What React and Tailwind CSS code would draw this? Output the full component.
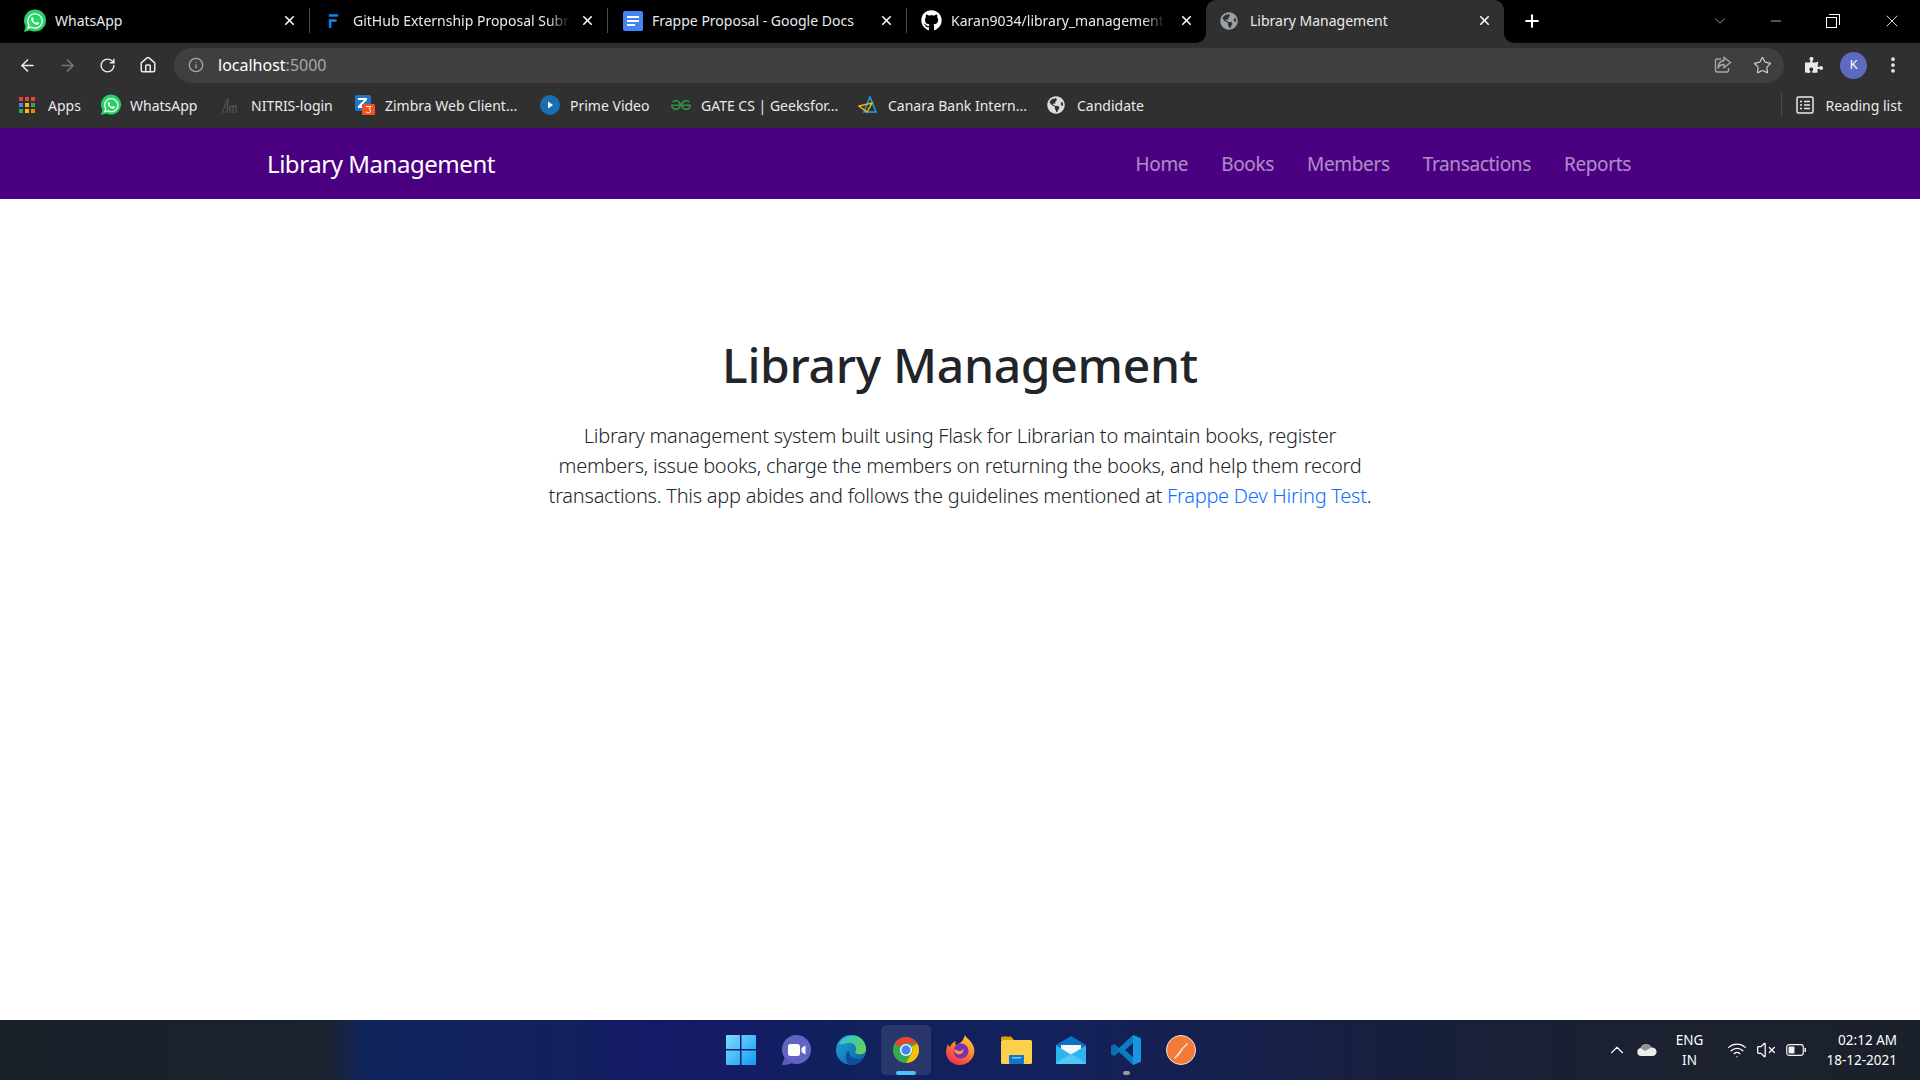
import { ArrowLeft, ArrowRight, RotateCw, Home, Info, Star, X, Plus, ChevronDown, Minus, ChevronUp, Wifi, VolumeX, EllipsisVertical } from "lucide-react";
import { FaWhatsapp, FaGithub, FaGlobeAmericas, FaPuzzlePiece } from "react-icons/fa";
import { SiGeeksforgeeks } from "react-icons/si";

const WhatsAppIcon = ({ size = 24 }) => (
  <span className="relative flex shrink-0 items-center justify-center" style={{ width: size, height: size }}>
    <svg viewBox="0 0 24 24" className="absolute inset-0 h-full w-full">
      <circle cx="12" cy="11.5" r="11" fill="#25d366" />
      <path d="M1 23l2-7 5 5z" fill="#25d366" />
    </svg>
    <FaWhatsapp className="relative text-white" style={{ width: size * 0.75, height: size * 0.75 }} />
  </span>
);

const FrappeIcon = () => (
  <svg viewBox="0 0 14 18" className="h-[16px] w-[12px] shrink-0">
    <rect x="1" y="1" width="11" height="3" fill="#0a84e8" />
    <rect x="1" y="7" width="9" height="3" fill="#0a84e8" />
    <rect x="1" y="7" width="3" height="10" fill="#0a84e8" />
  </svg>
);

const DocsIcon = () => (
  <svg viewBox="0 0 20 20" className="h-[20px] w-[20px] shrink-0">
    <rect width="20" height="20" rx="2" fill="#4285f4" />
    <rect x="4" y="5" width="12" height="2" fill="#fff" />
    <rect x="4" y="9" width="12" height="2" fill="#fff" />
    <rect x="4" y="13" width="8" height="2" fill="#fff" />
  </svg>
);

const AppsIcon = () => (
  <svg viewBox="0 0 16 16" className="h-[16px] w-[16px] shrink-0">
    {["#ea4335", "#ea4335", "#ea4335", "#4285f4", "#fbbc05", "#34a853", "#34a853", "#fbbc05", "#ea8600"].map((c, i) => (
      <rect key={i} x={(i % 3) * 6} y={Math.floor(i / 3) * 6} width="4" height="4" fill={c} />
    ))}
  </svg>
);

const NitrisIcon = () => (
  <svg viewBox="0 0 20 20" className="h-[20px] w-[20px] shrink-0" fill="none" stroke="#5f5f5f" strokeWidth="1">
    <path d="M2 18c2-4 4-12 6-14 0 4-1 10-1 14M10 18v-7M13 18v-7M16 18v-7M10 11h7" />
  </svg>
);

const ZimbraIcon = () => (
  <span className="relative h-[20px] w-[20px] shrink-0">
    <svg viewBox="0 0 20 20" className="h-[20px] w-[20px]">
      <rect x="0" y="0" width="16" height="16" rx="2" fill="#1f77c9" />
      <path d="M3 3h9v2l-6 6h6v2H3v-2l6-6H3z" fill="#fff" />
      <rect x="7" y="9" width="13" height="13" rx="1.5" fill="#f4511e" />
      <path d="M11 11.5h5l-2 2.5c2 0 2.4 3.5-.4 3.8-1 .1-2-.3-2.600-1" fill="none" stroke="#fff" strokeWidth="1" />
    </svg>
  </span>
);

const PrimeIcon = () => (
  <svg viewBox="0 0 20 20" className="h-[20px] w-[20px] shrink-0">
    <circle cx="10" cy="10" r="10" fill="#1a6eb0" />
    <path d="M8 6.500l5 3.500-5 3.500z" fill="#fff" />
  </svg>
);

const CanaraIcon = () => (
  <svg viewBox="0 0 20 18" className="h-[18px] w-[20px] shrink-0" fill="none" strokeWidth="1.500">
    <path d="M12 1l6 15H6z" stroke="#1aa5dc" />
    <path d="M1 10l13-3-5 9z" stroke="#f5b21a" />
  </svg>
);

const ShareIcon = () => (
  <svg viewBox="0 0 20 20" className="h-[20px] w-[20px]" fill="none" stroke="#a8a8a8" strokeWidth="1.400">
    <path d="M8 4H4a1.500 1.500 0 0 0-1.500 1.500v10A1.500 1.500 0 0 0 4 17h10a1.500 1.500 0 0 0 1.500-1.500V13" />
    <path d="M11 2.500l6.500 5-6.500 5V9.500c-3 0-5 1-6 4 0-4.500 2-7.500 6-8z" />
  </svg>
);

const ReadingListIcon = () => (
  <svg viewBox="0 0 18 18" className="h-[18px] w-[18px] shrink-0" fill="none" stroke="#e8eaed" strokeWidth="1.500">
    <rect x="1" y="1" width="16" height="16" rx="1.500" />
    <path d="M4 5.500h2M8 5.500h6M4 9h2M8 9h6M4 12.500h2M8 12.500h6" />
  </svg>
);

const WinIcon = () => (
  <svg viewBox="0 0 30 30" className="h-[30px] w-[30px]">
    <defs>
      <linearGradient id="win" x1="0" y1="0" x2="1" y2="1">
        <stop offset="0" stopColor="#7fdcff" />
        <stop offset="1" stopColor="#0f9cf5" />
      </linearGradient>
    </defs>
    <path d="M0 1a1 1 0 0 1 1-1h13v14H0zM15.500 0H29a1 1 0 0 1 1 1v13H15.500zM0 15.500h14V30H1a1 1 0 0 1-1-1zM15.500 15.500H30V29a1 1 0 0 1-1 1H15.500z" fill="url(#win)" />
  </svg>
);

const ChatIcon = () => (
  <svg viewBox="0 0 30 30" className="h-[30px] w-[30px]">
    <circle cx="15.500" cy="14.500" r="14.500" fill="#6264c4" />
    <path d="M1 30c1-4 2-6 4-8l6 6c-3 1.500-6 2-10 2z" fill="#5a5dbd" />
    <rect x="7" y="9" width="12" height="12" rx="2.500" fill="#fff" />
    <path d="M20.500 13l4-2.500v9l-4-2.500z" fill="#fff" />
  </svg>
);

const EdgeIcon = () => (
  <svg viewBox="0 0 30 30" className="h-[30px] w-[30px]">
    <defs>
      <linearGradient id="edge" x1="0" y1="0" x2="1" y2="1">
        <stop offset="0" stopColor="#1ea7d8" />
        <stop offset="1" stopColor="#0c5aa6" />
      </linearGradient>
      <linearGradient id="edge2" x1="0" y1="0" x2="1" y2="1">
        <stop offset="0" stopColor="#2bc3d2" />
        <stop offset="1" stopColor="#6fd34c" />
      </linearGradient>
    </defs>
    <circle cx="15" cy="15" r="15" fill="url(#edge)" />
    <path d="M3 9C6 2 14-1 21 1c6 2 9 8 9 13 0 5-5 6-9 5-2-.500-2-2-1-4 1-4-3-8-8-7-4 .500-7 2-9 1z" fill="url(#edge2)" />
    <path d="M13 16c0 5 4 8 9 8 2 0 4-.500 6-2-2 5-7 8-12 8-4 0-6-4-6-8 0-3 1-6 3-6z" fill="#0b4f96" />
  </svg>
);

const ChromeIcon = () => (
  <svg viewBox="0 0 30 30" className="h-[28px] w-[28px]">
    <circle cx="15" cy="15" r="14" fill="#34a853" />
    <path d="M15 1a14 14 0 0 1 12.120 7H15a7 7 0 0 0-6.100 3.500L2.900 8A14 14 0 0 1 15 1z" fill="#ea4335" />
    <path d="M27.120 8A14 14 0 0 1 15 29l6.060-10.500A7 7 0 0 0 21 11.500z" fill="#fbbc05" />
    <circle cx="15" cy="15" r="6.500" fill="#fff" />
    <circle cx="15" cy="15" r="5" fill="#4285f4" />
  </svg>
);

const FirefoxIcon = () => (
  <svg viewBox="0 0 30 30" className="h-[30px] w-[30px]">
    <defs>
      <linearGradient id="fx" x1="0.800" y1="0" x2="0.200" y2="1">
        <stop offset="0" stopColor="#ffd23a" />
        <stop offset="0.500" stopColor="#ff7a2b" />
        <stop offset="1" stopColor="#f0245c" />
      </linearGradient>
    </defs>
    <path d="M19 0c1 3 4 4 6 7 3 4 4 8 3 12-2 7-8 11-14 11C6 30 0 24 0 17c0-3 1-6 2-8 0 1 1 2 2 3 1-3 3-5 6-6-1 2-1 3 0 4 3-1 7-3 9-10z" fill="url(#fx)" />
    <circle cx="15" cy="16" r="7.500" fill="#7a2fb5" />
    <path d="M8 14c3 2 7 3 10 0-1 5-4 6-7 5-2-1-3-3-3-5z" fill="#ff9a3c" />
  </svg>
);

const FolderIcon = () => (
  <svg viewBox="0 0 31 28" className="h-[28px] w-[31px]">
    <path d="M0 2a1.500 1.500 0 0 1 1.500-1.500H10L13 4h-13z" fill="#d9a300" />
    <rect x="0" y="4" width="31" height="24" rx="1.500" fill="#fcd04a" />
    <rect x="8" y="19" width="15" height="9" rx="1" fill="#1178c9" />
    <rect x="11" y="21" width="9" height="1.500" fill="#7cc6f5" />
  </svg>
);

const MailIcon = () => (
  <svg viewBox="0 0 30 28" className="h-[28px] w-[30px]">
    <path d="M0 9L15 0l15 9v2L15 20 0 11z" fill="#0d72c4" />
    <path d="M5 9h20v6l-10 6-10-6z" fill="#f3f6fa" />
    <path d="M0 9.500l15 9 15-9V27a1 1 0 0 1-1 1H1a1 1 0 0 1-1-1z" fill="#2cb6f0" />
    <path d="M0 27l15-9 15 9v0a1 1 0 0 1-1 1H1a1 1 0 0 1-1-1z" fill="#4fc8f5" />
  </svg>
);

const VsCodeIcon = () => (
  <svg viewBox="0 0 30 30" className="h-[30px] w-[30px]">
    <path d="M22 0l8 3.500v23L22 30 8 17l-5 4-3-2v-8l3-2 5 4z" fill="#0a7cc4" />
    <path d="M22 0l8 3.500v23L22 30z" fill="#1a95e0" />
    <path d="M22 8l-8 7 8 7z" fill="#111f5c" />
    <path d="M3 9.500l-3 1.500v8l3 1.500L7 15z" fill="#0a6db0" />
  </svg>
);

const PostmanIcon = () => (
  <svg viewBox="0 0 30 30" className="h-[30px] w-[30px]">
    <circle cx="15" cy="15" r="14.500" fill="#f47a3a" stroke="#f6e6de" strokeWidth="1" />
    <path d="M8 23l5-6 3-4 5-5 1 1-5 5-3 5-5 5z" fill="#fbe3d6" />
  </svg>
);

const OneDrive = () => (
  <svg viewBox="0 0 20 12" className="h-[12px] w-[20px]">
    <path d="M4 12a4 4 0 0 1-.5-7.900A6 6 0 0 1 14.500 3.500 4.300 4.300 0 0 1 16 12z" fill="#ececec" />
    <path d="M3.500 4.100A6 6 0 0 1 14.500 3.500L8 7z" fill="#8f9399" />
  </svg>
);

const BatteryIcon = () => (
  <svg viewBox="0 0 20 12" className="h-[12px] w-[20px]" fill="none">
    <rect x="0.700" y="0.700" width="16.600" height="10.600" rx="2.500" stroke="#f2f2f2" strokeWidth="1.200" />
    <rect x="2.500" y="2.500" width="6" height="7" rx="1" fill="#f2f2f2" />
    <rect x="18.500" y="4" width="1.500" height="4" fill="#f2f2f2" />
  </svg>
);

const tabs = [
  { title: "WhatsApp", icon: <WhatsAppIcon />, cls: "w-[310px] pl-[23px]", gap: "gap-[8px] pr-[12px]" },
  { title: "GitHub Externship Proposal Submission", icon: <FrappeIcon />, cls: "w-[298px] pl-[18px]", gap: "gap-[13px] pr-[10px]" },
  { title: "Frappe Proposal - Google Docs", icon: <DocsIcon />, cls: "w-[299px] pl-[15px]", gap: "gap-[9px] pr-[8px]" },
  { title: "Karan9034/library_management: Library", icon: <FaGithub className="h-[21px] w-[21px] shrink-0 text-white" />, cls: "w-[299px] pl-[14px] pr-[12px]", gap: "gap-[9px] pr-[14px]" },
];

const bookmarks = [
  { title: "Apps", icon: <AppsIcon />, w: "w-[81px] gap-[13px]" },
  { title: "WhatsApp", icon: <WhatsAppIcon size={22} />, w: "w-[120px] gap-[8px]" },
  { title: "NITRIS-login", icon: <NitrisIcon />, w: "w-[135px] gap-[11px]" },
  { title: "Zimbra Web Client...", icon: <ZimbraIcon />, w: "w-[185px] gap-[10px]" },
  { title: "Prime Video", icon: <PrimeIcon />, w: "w-[131px] gap-[10px]" },
  { title: "GATE CS | Geeksfor...", icon: <SiGeeksforgeeks className="h-[20px] w-[20px] shrink-0 text-[#2f8d46]" />, w: "w-[187px] gap-[10px]" },
  { title: "Canara Bank Intern...", icon: <CanaraIcon />, w: "w-[189px] gap-[10px]" },
  { title: "Candidate", icon: <FaGlobeAmericas className="h-[18px] w-[18px] shrink-0 text-[#dcdcdc]" />, w: "w-[120px] gap-[12px]" },
];

const navLinks = ["Home", "Books", "Members", "Transactions", "Reports"];
const taskbarIcons = [<WinIcon />, <ChatIcon />, <EdgeIcon />, <ChromeIcon />, <FirefoxIcon />, <FolderIcon />, <MailIcon />, <VsCodeIcon />, <PostmanIcon />];

export default function App() {
  return (
    <div className="flex h-screen w-full flex-col overflow-hidden bg-white font-['Noto_Sans',sans-serif]">
      {/* Tab strip */}
      <div className="flex h-[43px] shrink-0 items-stretch bg-[#303030] text-white">
        <div className="flex shrink-0 rounded-br-[10px] bg-black">
          {tabs.map((tab, i) => (
            <div key={i} className={`flex h-[43px] shrink-0 items-center pb-[2px] ${tab.cls}`}>
              <div className={`flex min-w-0 flex-1 items-center ${tab.gap}`}>
                {tab.icon}
                <span className={`min-w-0 flex-1 overflow-hidden whitespace-nowrap text-[14px] text-[#e8eaed] ${i === 1 || i === 3 ? "[mask-image:linear-gradient(90deg,#000_90%,transparent)]" : ""}`}>{tab.title}</span>
              </div>
              <X className="h-[15px] w-[15px] shrink-0 text-white" strokeWidth={2.5} />
              {i < 3 && <span className="ml-[12px] h-[25px] w-px shrink-0 bg-[#4a4a4a]" />}
            </div>
          ))}
        </div>
        <div className="w-[298px] shrink-0 bg-black">
          <div className="flex h-[43px] items-center gap-[12px] rounded-t-[10px] bg-[#303030] pb-[2px] pl-[14px] pr-[12px]">
            <FaGlobeAmericas className="h-[18px] w-[18px] shrink-0 text-[#9aa0a6]" />
            <span className="flex-1 whitespace-nowrap text-[14px] text-[#e8eaed]">Library Management</span>
            <X className="h-[15px] w-[15px] shrink-0 text-white" strokeWidth={2.5} />
          </div>
        </div>
        <div className="flex flex-1 items-center rounded-bl-[10px] bg-black pb-[2px] pl-[18px]">
          <Plus className="h-[20px] w-[20px] text-white" strokeWidth={2.5} />
          <div className="ml-auto flex items-center">
            <ChevronDown className="mr-[39px] h-[18px] w-[18px] text-[#bdbdbd]" strokeWidth={1} />
            <Minus className="mr-[42px] h-[16px] w-[16px] text-white" strokeWidth={1} />
            <span className="relative mr-[42px] h-[14px] w-[14px]">
              <span className="absolute bottom-0 left-0 h-[11px] w-[11px] border border-white" />
              <span className="absolute right-0 top-0 h-[11px] w-[11px] border-r border-t border-white" />
            </span>
            <X className="mr-[18px] h-[20px] w-[20px] text-white" strokeWidth={1} />
          </div>
        </div>
      </div>

      {/* Toolbar */}
      <div className="flex h-[44px] shrink-0 items-center bg-[#303030] pl-[18px]">
        <ArrowLeft className="h-[19px] w-[19px] text-[#e8eaed]" strokeWidth={2} />
        <ArrowRight className="ml-[21px] h-[19px] w-[19px] text-[#77797b]" strokeWidth={2} />
        <RotateCw className="ml-[22px] h-[17px] w-[17px] text-[#e8eaed]" strokeWidth={2} />
        <Home className="ml-[23px] h-[18px] w-[18px] text-[#e8eaed]" strokeWidth={2} />
        <div className="ml-[17px] flex h-[35px] w-[1610px] items-center rounded-full bg-[#3f3f3f] pl-[14px] pr-[12px]">
          <Info className="h-[16px] w-[16px] text-[#a8a8a8]" strokeWidth={2} />
          <span className="ml-[14px] text-[16px] text-white">localhost<span className="text-[#a8a8a8]">:5000</span></span>
          <div className="ml-auto flex items-center gap-[20px]">
            <ShareIcon />
            <Star className="h-[19px] w-[19px] text-[#d0d0d0]" strokeWidth={1.5} />
          </div>
        </div>
        <FaPuzzlePiece className="ml-[21px] h-[18px] w-[18px] text-[#e8eaed]" />
        <span className="ml-[17px] flex h-[27px] w-[27px] items-center justify-center rounded-full bg-[#5c6bc0] text-[13px] text-white">K</span>
        <EllipsisVertical className="ml-[16px] h-[20px] w-[20px] text-[#e8eaed]" strokeWidth={2.5} />
      </div>

      {/* Bookmarks */}
      <div className="flex h-[41px] shrink-0 items-center bg-[#303030] pb-[5px] pl-[19px] text-[#e8eaed]">
        {bookmarks.map((b, i) => (
          <div key={i} className={`flex shrink-0 items-center ${b.w}`}>
            {b.icon}
            <span className="whitespace-nowrap text-[14px]">{b.title}</span>
          </div>
        ))}
        <div className="ml-auto flex items-center pr-[18px]">
          <span className="mr-[14px] h-[24px] w-px bg-[#4d4d4d]" />
          <ReadingListIcon />
          <span className="ml-[11px] whitespace-nowrap text-[14px]">Reading list</span>
        </div>
      </div>

      {/* Navbar */}
      <nav className="flex h-[71px] shrink-0 items-center justify-between bg-[#4b0082] pl-[267px] pr-[289px] pt-[1px]">
        <span className="text-[24px] tracking-[-0.45px] text-white">Library Management</span>
        <div className="flex items-center gap-[33px]">
          {navLinks.map((link) => (
            <span key={link} className="text-[19px] tracking-[-0.35px] text-white/55">{link}</span>
          ))}
        </div>
      </nav>

      {/* Main */}
      <main className="flex flex-1 flex-col items-center bg-white pt-[136px]">
        <h1 className="text-[48px] font-medium leading-[60px] tracking-[-0.3px] text-[#212529]">Library Management</h1>
        <p className="mt-[26px] w-[860px] text-center text-[20px] font-light leading-[30px] tracking-[-0.25px] text-[#212529]">
          Library management system built using Flask for Librarian to maintain books, register<br />members, issue books, charge the members on returning the books, and help them record<br />transactions. This app abides and follows the guidelines mentioned at <span className="text-[#0d6efd]">Frappe Dev Hiring Test</span>.
        </p>
      </main>

      {/* Taskbar */}
      <div className="grid h-[60px] shrink-0 grid-cols-[1fr_auto_1fr] items-center bg-[linear-gradient(90deg,#1b2129_0%,#1b2230_17%,#10245c_19%,#12205e_30%,#151a68_34%,#10215c_45%,#13215c_55%,#181f3e_72%,#1b2130_85%,#1b212b_100%)] text-white">
        <div />
        <div className="ml-[2px] flex items-center">
          {taskbarIcons.map((icon, i) => (
            <div key={i} className="relative flex h-[50px] w-[55px] items-center justify-center">
              {i === 3 && <span className="absolute inset-y-0 left-[2px] w-[50px] rounded-[5px] bg-white/10" />}
              <span className="relative flex">{icon}</span>
              {i === 3 && <span className="absolute bottom-0 left-[17px] h-[4px] w-[20px] rounded-full bg-[#4fc3f7]" />}
              {i === 7 && <span className="absolute bottom-0 left-[24px] h-[4px] w-[7px] rounded-full bg-[#9a9a9a]" />}
            </div>
          ))}
        </div>
        <div className="flex items-center justify-end pr-[23px]">
          <ChevronUp className="h-[22px] w-[22px] text-white" strokeWidth={1.2} />
          <span className="ml-[9px]"><OneDrive /></span>
          <div className="ml-[11px] w-[44px] text-center text-[13.500px] leading-[20px]">ENG<br />IN</div>
          <Wifi className="ml-[15px] h-[20px] w-[20px]" strokeWidth={1.5} />
          <VolumeX className="ml-[9px] h-[20px] w-[20px]" strokeWidth={1.5} />
          <span className="ml-[10px]"><BatteryIcon /></span>
          <div className="ml-[21px] text-right text-[13.500px] leading-[20px]">02:12 AM<br />18-12-2021</div>
        </div>
      </div>
    </div>
  );
}
